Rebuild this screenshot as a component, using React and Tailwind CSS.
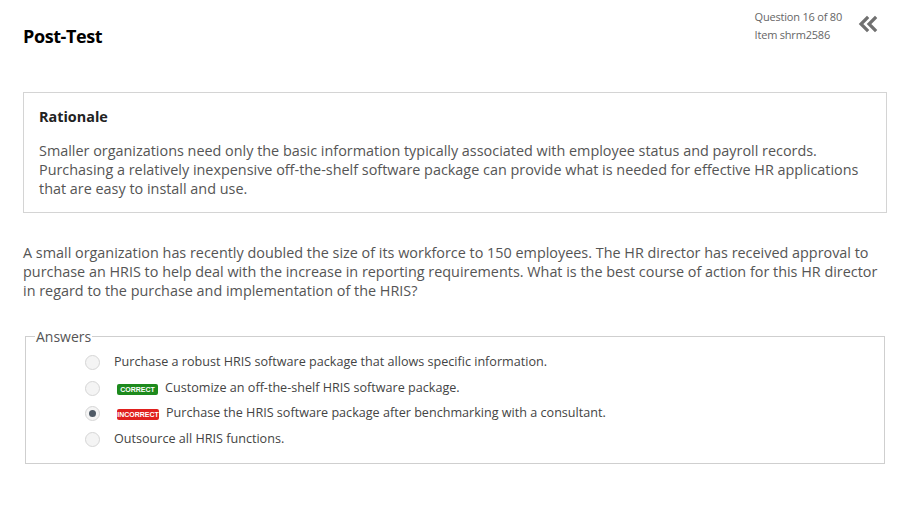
const answers = [
  { text: 'Purchase a robust HRIS software package that allows specific information.' },
  { text: 'Customize an off-the-shelf HRIS software package.', badge: 'correct' },
  { text: 'Purchase the HRIS software package after benchmarking with a consultant.', badge: 'incorrect', checked: true },
  { text: 'Outsource all HRIS functions.' },
];

function Radio({ checked }) {
  return (
    <span className="w-[15px] h-[15px] rounded-full border border-[#d6d6d6] bg-[#f4f4f4] flex items-center justify-center shrink-0">
      {checked && <span className="w-[7px] h-[7px] rounded-full bg-[#4f5a66]" />}
    </span>
  );
}

function Badge({ kind }) {
  const correct = kind === 'correct';
  return (
    <span
      className={`inline-flex items-center justify-center h-[11px] rounded-[2px] px-[3px] text-[7px] font-bold leading-none text-white ${correct ? 'bg-[#1d8a1d] w-[41px]' : 'bg-[#e0201e] w-[42px]'}`}
      style={{ fontFamily: '"Liberation Sans", sans-serif' }}
    >
      {correct ? 'CORRECT' : 'INCORRECT'}
    </span>
  );
}

export default function App() {
  return (
    <div className="w-[918px] h-[524px] bg-white text-[#555]" style={{ fontFamily: '"Open Sans", sans-serif' }}>
      <div className="flex justify-between items-start pl-[23px] pr-[40px] pt-[8px]">
        <h1 className="mt-[15px] text-[18px] font-bold text-black tracking-[-0.4px]">Post-Test</h1>
        <div className="flex items-start gap-[16px]">
          <div className="text-[11px] leading-[18px] text-[#666] tracking-[-0.2px]">
            <p>Question 16 of 80</p>
            <p>Item shrm2586</p>
          </div>
          <svg width="20" height="18" viewBox="0 0 20 18" className="mt-[7px]" fill="none" stroke="#707070" strokeWidth="3.2" strokeLinecap="square" strokeLinejoin="miter">
            <path d="M9 3 L3 9 L9 15" />
            <path d="M17 3 L11 9 L17 15" />
          </svg>
        </div>
      </div>

      <div className="mx-[23px] mt-[42px] w-[864px] border border-[#d4d4d4] px-[15px] pt-[14px] pb-[14px]">
        <h2 className="text-[14.4px] font-bold text-[#222] leading-[19px]">Rationale</h2>
        <p className="mt-[15px] text-[14.4px] leading-[19px]">
          Smaller organizations need only the basic information typically associated with employee status and payroll records. Purchasing a relatively inexpensive off-the-shelf software package can provide what is needed for effective HR applications that are easy to install and use.
        </p>
      </div>

      <p className="mx-[23px] mt-[30px] w-[864px] text-[14.4px] leading-[19px]">
        A small organization has recently doubled the size of its workforce to 150 employees. The HR director has received approval to purchase an HRIS to help deal with the increase in reporting requirements. What is the best course of action for this HR director in regard to the purchase and implementation of the HRIS?
      </p>

      <fieldset className="ml-[25px] mt-[27px] w-[860px] h-[137px] border border-[#cfcfcf]">
        <legend className="text-[14px] leading-[19px] px-[1px] ml-[9px]">Answers</legend>
        <div className="flex flex-col pl-[59px] pt-[4px]">
          {answers.map(a => (
            <div key={a.text} className="flex items-center h-[25.5px] text-[12.6px] text-[#444]">
              <Radio checked={a.checked} />
              <div className="flex items-center gap-[7px] ml-[14px]">
                {a.badge && <span className="ml-[3px]"><Badge kind={a.badge} /></span>}
                <span>{a.text}</span>
              </div>
            </div>
          ))}
        </div>
      </fieldset>
    </div>
  );
}
